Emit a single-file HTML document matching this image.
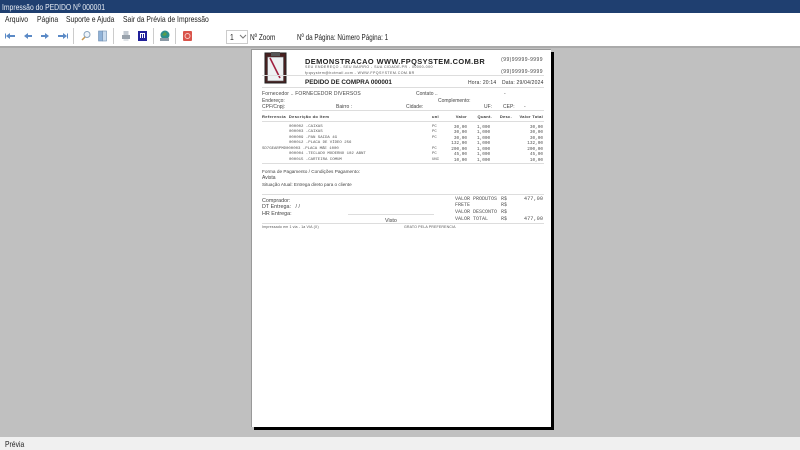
<!DOCTYPE html>
<html lang="pt"><head><meta charset="utf-8"><title>Impressão do PEDIDO Nº 000001</title>
<style>
html,body{margin:0;padding:0;width:800px;height:450px;overflow:hidden;background:#c0c0c0;font-family:"Liberation Sans",sans-serif}
div,span{position:absolute;white-space:nowrap}
svg{position:absolute}
.ui{font-size:8.5px;color:#222;line-height:10px;transform:scaleX(.8);transform-origin:0 0}
.t{font-size:5px;color:#444;line-height:6px}
.d{font-size:3.6px;color:#555;line-height:5px;letter-spacing:.55px}
.b{font-size:4px;font-weight:bold;color:#333;letter-spacing:.3px}
.m{font-family:"Liberation Mono",monospace;font-size:4px;color:#555;line-height:5px}
.n{font-family:"Liberation Mono",monospace;font-size:4.4px;color:#555;line-height:5px}
.v{font-family:"Liberation Mono",monospace;font-size:5px;color:#555;line-height:6px}
.r{text-align:right}
.h{background:#ddd;height:1px}
</style></head><body>
<div style="left:0;top:0;width:800px;height:13px;background:#1f3f70"></div>
<div class="ui" style="left:2px;top:2px;color:#e8edf4">Impressão do PEDIDO Nº 000001</div>
<div style="left:0;top:13px;width:800px;height:12px;background:#fff"></div>
<div class="ui" style="left:5px;top:14px">Arquivo</div>
<div class="ui" style="left:37px;top:14px">Página</div>
<div class="ui" style="left:66px;top:14px">Suporte e Ajuda</div>
<div class="ui" style="left:123px;top:14px">Sair da Prévia de Impressão</div>
<div style="left:0;top:25px;width:800px;height:21px;background:#fff"></div>
<div style="left:0;top:46px;width:800px;height:2px;background:#aaa"></div>
<svg width="240" height="24" style="left:0;top:25px" viewBox="0 0 240 24">
<g fill="#5b8ac6"><path d="M5 8.500h1v5H5zM6 11l4-3v2h5v2h-5v2z"/><path d="M24 11l4-3v2h4v2h-4v2z"/><path d="M49 11l-4-3v2h-4v2h4v2z"/><path d="M67 11l-4-3v2h-5v2h5v2zM67 8.500h1v5h-1z"/></g>
<g fill="#ccc"><rect x="73" y="3" width="1" height="16"/><rect x="113" y="3" width="1" height="16"/><rect x="153" y="3" width="1" height="16"/><rect x="175" y="3" width="1" height="16"/></g>
<circle cx="87" cy="9.500" r="3" fill="#eef4fa" stroke="#8aa4bd"/><path d="M85 12l-3 3" stroke="#c89850" stroke-width="1.500"/>
<rect x="98.500" y="6" width="4" height="10" fill="#8fb2d8" stroke="#6d8cb0" stroke-width=".6"/><rect x="102.500" y="6" width="4" height="10" fill="#c9dbee" stroke="#6d8cb0" stroke-width=".6"/>
<rect x="122" y="10" width="8" height="4" fill="#99a2ac"/><rect x="123.500" y="6" width="5" height="4" fill="#c3cad2"/><rect x="123.500" y="14" width="5" height="2" fill="#dfe3e7"/>
<rect x="138" y="6" width="9" height="10" fill="#20209a"/><path d="M140 8h5v5h-1v-4h-1v4h-1v-4h-1v4h-1z" fill="#fff"/>
<circle cx="165" cy="10" r="4.500" fill="#2c8d8c"/><path d="M162 10l3-3 2 2-2 2z" fill="#5a9e48"/><rect x="160" y="13" width="9" height="3" fill="#8a99a5"/>
<rect x="183" y="6" width="9" height="10" rx="1" fill="#d9534a"/><circle cx="187.500" cy="11" r="2.500" fill="none" stroke="#f5c9c5"/>
</svg>
<div style="left:226px;top:30px;width:20px;height:12px;border:1px solid #ccc;background:#fff"></div>
<div class="ui" style="left:230px;top:32px">1</div>
<svg width="8" height="6" style="left:239px;top:34px"><path d="M1 1l3 3 3-3" fill="none" stroke="#777"/></svg>
<div class="ui" style="left:250px;top:32px;transform:scaleX(.76)">Nº Zoom</div>
<div class="ui" style="left:297px;top:32px;transform:scaleX(.74)">Nº da Página: Número Página: 1</div>

<div style="left:551px;top:52px;width:3px;height:378px;background:#000"></div>
<div style="left:254px;top:427px;width:300px;height:3px;background:#000"></div>
<div style="left:251px;top:49px;width:300px;height:378px;background:#fff;border-left:1px solid #999;border-top:1px solid #999;box-sizing:border-box"></div>

<svg width="24" height="34" style="left:264px;top:51px" viewBox="0 0 24 34">
<rect x="1" y="2" width="21" height="30" fill="#4a2020"/><rect x="1" y="2" width="21" height="30" fill="none" stroke="#222"/>
<rect x="3.500" y="6" width="16" height="24" fill="#eef1f3" stroke="#555" stroke-width=".6"/>
<rect x="7" y="1" width="9" height="4" fill="#555"/>
<path d="M6 7l10 20" stroke="#a02040" stroke-width="1.600"/>
</svg>

<div style="left:305px;top:57px;font-size:7.400px;font-weight:bold;color:#222;letter-spacing:.42px;line-height:9px">DEMONSTRACAO WWW.FPQSYSTEM.COM.BR</div>
<div class="d" style="left:305px;top:65px;letter-spacing:.42px">SEU ENDEREÇO - SEU BAIRRO - SUA CIDADE-PR - 00000-000</div>
<div class="d" style="left:305px;top:71px;letter-spacing:.42px">fpqsystem@hotmail.com - WWW.FPQSYSTEM.COM.BR</div>
<div class="t r" style="left:490px;width:53px;top:57px;letter-spacing:.45px">(99)99999-9999</div>
<div class="t r" style="left:490px;width:53px;top:69px;letter-spacing:.45px">(99)99999-9999</div>
<div class="h" style="left:262px;width:282px;top:75px"></div>
<div style="left:305px;top:78px;font-size:6.300px;font-weight:bold;color:#222;line-height:9px">PEDIDO DE COMPRA 000001</div>
<div class="t" style="left:468px;top:80px;letter-spacing:.2px;color:#333">Hora: 20:14</div>
<div class="t" style="left:502px;top:80px;letter-spacing:.2px;color:#333">Data: 29/04/2024</div>
<div class="h" style="left:262px;width:282px;top:87px"></div>

<div class="t" style="left:262px;top:91px;letter-spacing:.15px">Fornecedor .. FORNECEDOR DIVERSOS</div>
<div class="t" style="left:416px;top:91px">Contato ..</div>
<div class="t" style="left:504px;top:91px">-</div>
<div class="t" style="left:262px;top:98px">Endereço:</div>
<div class="t" style="left:438px;top:98px">Complemento:</div>
<div class="t" style="left:262px;top:104px">CPF/Cnpj:</div>
<div class="t" style="left:336px;top:104px">Bairro :</div>
<div class="t" style="left:406px;top:104px">Cidade:</div>
<div class="t" style="left:484px;top:104px">UF:</div>
<div class="t" style="left:503px;top:104px">CEP:</div>
<div class="t" style="left:524px;top:104px">-</div>
<div class="h" style="left:262px;width:282px;top:110px"></div>

<div class="d b" style="left:262px;top:114px;letter-spacing:.35px">Referencia &nbsp;Descrição do Item</div>
<div class="d b" style="left:432px;top:114px">unl</div>
<div class="d b r" style="left:440px;width:27px;top:114px">Valor</div>
<div class="d b r" style="left:465px;width:27px;top:114px">Quant.</div>
<div class="d b r" style="left:485px;width:27px;top:114px">Desc.</div>
<div class="d b r" style="left:503px;width:40px;top:114px">Valor Total</div>
<div class="h" style="left:262px;width:282px;top:121px"></div>

<div class="m" style="left:289px;top:125px">000002 -CAIXAS</div>
<div class="m" style="left:289px;top:130px">000003 -CAIXAS</div>
<div class="m" style="left:289px;top:136px">000009 -PAN SAIDA 4G</div>
<div class="m" style="left:289px;top:141px">000012 -PLACA DE VÍDEO 256</div>
<div class="m" style="left:262px;top:147px">SD7GEARPMD000003 -PLACA MÃE 1000</div>
<div class="m" style="left:289px;top:152px">000004 -TECLADO MODERNO 102 ABNT</div>
<div class="m" style="left:289px;top:158px">000015 -CARTEIRA COMUM</div>

<div class="m" style="left:432px;top:125px">PC</div>
<div class="m" style="left:432px;top:130px">PC</div>
<div class="m" style="left:432px;top:136px">PC</div>
<div class="m" style="left:432px;top:147px">PC</div>
<div class="m" style="left:432px;top:152px">PC</div>
<div class="m" style="left:432px;top:158px">UNI</div>

<div class="n r" style="left:440px;width:27px;top:125px">30,00</div>
<div class="n r" style="left:440px;width:27px;top:130px">30,00</div>
<div class="n r" style="left:440px;width:27px;top:136px">30,00</div>
<div class="n r" style="left:440px;width:27px;top:141px">132,00</div>
<div class="n r" style="left:440px;width:27px;top:147px">200,00</div>
<div class="n r" style="left:440px;width:27px;top:152px">45,00</div>
<div class="n r" style="left:440px;width:27px;top:158px">10,00</div>

<div class="n" style="left:477px;top:125px">1,000</div>
<div class="n" style="left:477px;top:130px">1,000</div>
<div class="n" style="left:477px;top:136px">1,000</div>
<div class="n" style="left:477px;top:141px">1,000</div>
<div class="n" style="left:477px;top:147px">1,000</div>
<div class="n" style="left:477px;top:152px">1,000</div>
<div class="n" style="left:477px;top:158px">1,000</div>

<div class="n r" style="left:503px;width:40px;top:125px">30,00</div>
<div class="n r" style="left:503px;width:40px;top:130px">30,00</div>
<div class="n r" style="left:503px;width:40px;top:136px">30,00</div>
<div class="n r" style="left:503px;width:40px;top:141px">132,00</div>
<div class="n r" style="left:503px;width:40px;top:147px">200,00</div>
<div class="n r" style="left:503px;width:40px;top:152px">45,00</div>
<div class="n r" style="left:503px;width:40px;top:158px">10,00</div>
<div class="h" style="left:262px;width:282px;top:163px"></div>

<div class="t" style="left:262px;top:169px;font-size:4.700px">Forma de Pagamento / Condições Pagamento:</div>
<div class="t" style="left:262px;top:175px">Avista</div>
<div class="t" style="left:262px;top:182px;font-size:4.600px">Situação Atual: Entrega direto para o cliente</div>
<div class="h" style="left:262px;width:282px;top:194px"></div>

<div class="t" style="left:262px;top:198px;font-size:5.400px">Comprador:</div>
<div class="t" style="left:262px;top:204px;font-size:5.400px">DT Entrega: &nbsp; / /</div>
<div class="t" style="left:262px;top:211px;font-size:5.400px">HR Entrega:</div>
<div class="h" style="left:348px;width:86px;top:214px"></div>
<div class="t" style="left:385px;top:218px;font-size:5.400px">Visto</div>

<div class="v" style="left:455px;top:196px">VALOR PRODUTOS</div>
<div class="v" style="left:501px;top:196px">R$</div>
<div class="v r" style="left:510px;width:33px;top:196px;font-size:5.300px">477,00</div>
<div class="v" style="left:455px;top:202px">FRETE</div>
<div class="v" style="left:501px;top:202px">R$</div>
<div class="v" style="left:455px;top:209px">VALOR DESCONTO</div>
<div class="v" style="left:501px;top:209px">R$</div>
<div class="v" style="left:455px;top:216px">VALOR TOTAL</div>
<div class="v" style="left:501px;top:216px">R$</div>
<div class="v r" style="left:510px;width:33px;top:216px;font-size:5.300px">477,00</div>
<div class="h" style="left:262px;width:282px;top:223px"></div>
<div class="d" style="left:262px;top:225px;letter-spacing:.12px">Impressado em 1 via - 1a VIA (X)</div>
<div class="d" style="left:404px;top:225px;letter-spacing:.12px">GRATO PELA PREFERENCIA</div>

<div style="left:0;top:437px;width:800px;height:13px;background:#f0f0f0"></div>
<div class="ui" style="left:5px;top:439px">Prévia</div>
</body></html>
